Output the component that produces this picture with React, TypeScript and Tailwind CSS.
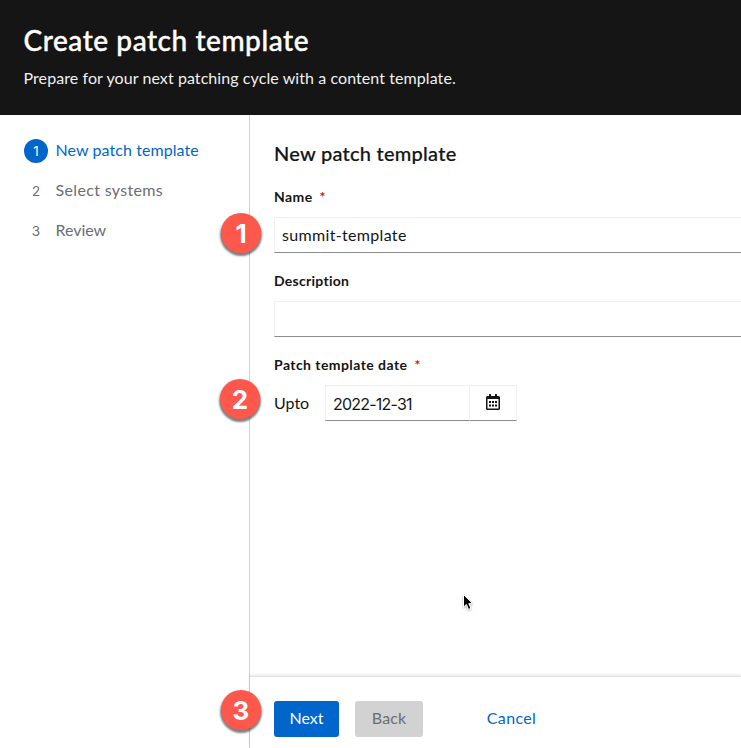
import React from 'react';

function Badge({ n, className }: { n: number; className: string }) {
  return (
    <div
      className={`absolute flex size-10 items-center justify-center rounded-full bg-[#fe574b] pt-px font-[Inter,sans-serif] text-[26px] leading-none font-bold text-white shadow-[0_2px_2px_1px_rgba(0,0,0,0.5)] ${className}`}
    >
      {n}
    </div>
  );
}

function Label({ children, required, className }: { children: string; required?: boolean; className: string }) {
  return (
    <div className="flex h-5 items-center text-[14px] leading-5 font-bold text-[#151515]">
      <span className={className}>{children}</span>
      {required && <span className="ml-[7px] text-[#c9190b]">*</span>}
    </div>
  );
}

function Step({ n, active, children, className }: { n: number; active?: boolean; children: string; className: string }) {
  return (
    <div className={`flex ${active ? 'text-[#0066cc]' : ''}`}>
      <span
        className={`flex size-6 items-center justify-center rounded-full font-[Inter,sans-serif] text-[13.5px] ${active ? 'bg-[#0066cc] text-white' : ''}`}
      >
        {n}
      </span>
      <span className={`-mt-px ml-[7.5px] ${className}`}>{children}</span>
    </div>
  );
}

function CalendarIcon() {
  return (
    <svg className="mb-[2px] h-4 w-3.5" viewBox="0 0 14 16" fill="#151515">
      <path
        fillRule="evenodd"
        d="M3 .4a.4.4 0 0 1 .4-.4h1.2a.4.4 0 0 1 .4.4V2h4V.4a.4.4 0 0 1 .4-.4h1.2a.4.4 0 0 1 .4.4V2h1.5A1.5 1.5 0 0 1 14 3.5v11a1.5 1.5 0 0 1-1.5 1.5h-11A1.5 1.5 0 0 1 0 14.500v-11A1.5 1.500 0 0 1 1.500 2H3zM1.500 5v9.300q0 .2.2.2h10.600q.2 0 .2-.2V5z"
      />
      <path d="M3 7h2v2H3zM6 7h2v2H6zM9 7h2v2H9zM3 10.500h2v2H3zM6 10.500h2v2H6zM9 10.500h2v2H9z" />
    </svg>
  );
}

const box = 'h-9 border border-[#f0f0f0] border-b-[#8a8d90] bg-white';

export default function App() {
  return (
    <div className="relative flex h-[748px] w-[741px] flex-col overflow-hidden bg-white font-[Lato,sans-serif] text-[16px] leading-6 text-[#151515]">
      <header className="h-[115px] shrink-0 bg-[#151515] pt-[22px] pl-[23.5px] whitespace-nowrap text-white">
        <h1 className="text-[28px] leading-9 font-medium tracking-[0.56px] [-webkit-text-stroke:0.4px_white]">Create patch template</h1>
        <p className="mt-2 tracking-[0.08px] text-[#f0f0f0]">Prepare for your next patching cycle with a content template.</p>
      </header>

      <div className="flex min-h-0 flex-1">
        <nav className="flex w-[250px] shrink-0 flex-col gap-4 border-r border-[#d2d2d2] pt-6 pl-6 text-[#6a6e73]">
          <Step n={1} active className="tracking-[0.08px]">New patch template</Step>
          <Step n={2} className="tracking-[0.34px]">Select systems</Step>
          <Step n={3} className="tracking-[-0.05px]">Review</Step>
        </nav>

        <div className="flex min-w-0 flex-1 flex-col">
          <main className="flex-1 pt-[23px] pl-6">
            <h2 className="text-[20px] leading-[30px] font-medium tracking-[0.25px] [-webkit-text-stroke:0.2px_#151515]">New patch template</h2>
            <div className="mt-[19px]">
              <Label required className="tracking-[0.4px]">Name</Label>
              <div className={`${box} mt-[10px] w-[480px] px-[7px] pt-[5px] tracking-[0.33px]`}>summit-template</div>
            </div>
            <div className="mt-[18px]">
              <Label className="tracking-[0.27px]">Description</Label>
              <div className={`${box} mt-[10px] w-[480px]`} />
            </div>
            <div className="mt-[18px]">
              <Label required className="tracking-[0.44px]">Patch template date</Label>
              <div className="mt-[10px] flex">
                <span className="w-[51px] pt-[6px]">Upto</span>
                <div className={`${box} w-[145px] border-r-0 px-[7px] pt-[6px] font-[Inter,sans-serif] tracking-[-0.78px]`}>2022-12-31</div>
                <div className={`${box} -ml-px flex w-[48px] items-center justify-center`}>
                  <CalendarIcon />
                </div>
              </div>
            </div>
          </main>
          <footer className="flex h-[72px] shrink-0 items-start border-t border-[#e4e4e4] pt-6 pl-6 shadow-[0_-1px_3px_rgba(3,3,3,0.1)]">
            <button className="h-9 w-[65px] rounded-[3px] bg-[#0066cc] pb-[2px] text-white">Next</button>
            <button className="ml-4 h-9 w-[68px] rounded-[3px] bg-[#d2d2d2] pb-[2px] tracking-[0.1px] text-[#6a6e73]">Back</button>
            <button className="ml-12 h-9 w-[81px] pb-[2px] tracking-[0.35px] text-[#0066cc]">Cancel</button>
          </footer>
        </div>
      </div>

      <Badge n={1} className="top-[213px] left-[221px]" />
      <Badge n={2} className="top-[379px] left-[220px]" />
      <Badge n={3} className="top-[690px] left-[221px]" />

      <svg className="absolute top-[593px] left-[462px] drop-shadow-[0_1px_1px_rgba(0,0,0,0.3)]" width="13" height="19" viewBox="0 0 13 19">
        <path d="M1.5 1.5v12.6l2.9-2.7 2.1 5 2.4-1-2.1-4.8h3.9z" fill="#000" stroke="#fff" strokeWidth="1" />
      </svg>
    </div>
  );
}
